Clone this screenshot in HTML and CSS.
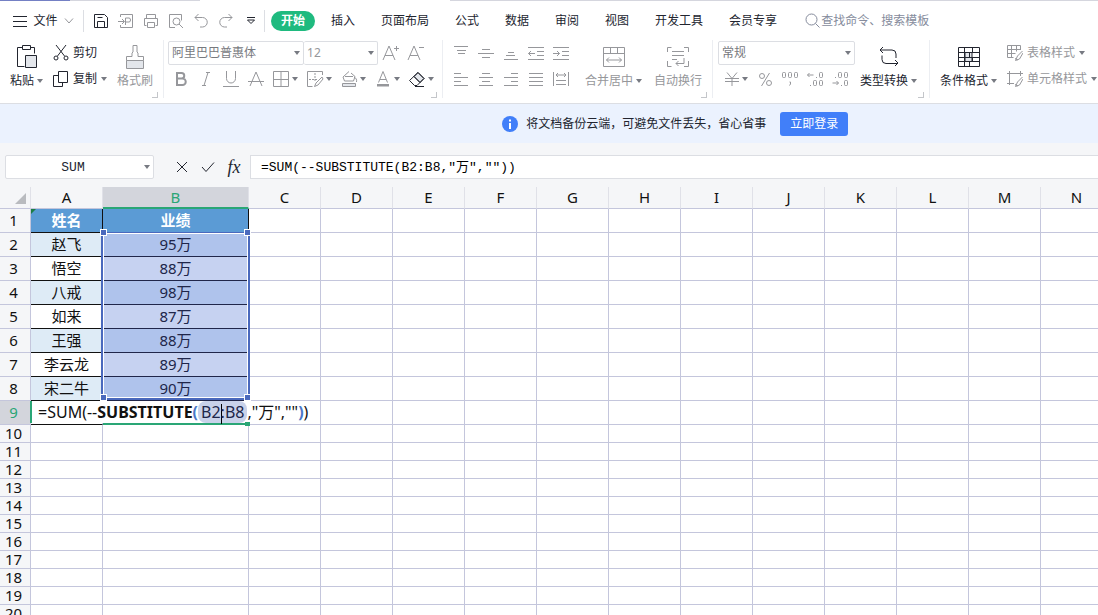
FILE: index.html
```html
<!DOCTYPE html>
<html lang="zh-CN">
<head>
  <meta charset="UTF-8" />
  <title>表格</title>
  <link rel="stylesheet" href="styles.css">
</head>
<body>
  <div class="window-edge"></div>

  <nav class="menubar">
    <button class="file">
      <svg class="icon" width="14" height="12"><path d="M0 1.5h14M0 6.5h14M0 11.5h14"/></svg>
      文件
      <svg class="icon muted" width="10" height="6"><path d="M1 .5l4 4.500 4-4.500"/></svg>
    </button>
    <div class="quick">
      <button title="保存"><svg class="icon" width="16" height="16"><path d="M1.500 1.500h10l3 3v10h-13zM4.500 14.500v-6h7v6M4.500 4.500h5"/></svg></button>
      <button class="muted" title="输出为PDF"><svg class="icon" width="16" height="16"><path d="M2.500 4v-2.500h12v13h-12v-2.500M0 8.500h6M4 6l2.500 2.500-2.500 2.500M7.500 12v-7h3.500a1.500 2 0 010 4h-3.500"/></svg></button>
      <button class="muted" title="打印"><svg class="icon" width="16" height="16"><path d="M3.500 5v-3.500h9v3.500M3.500 12.500h-2v-7h13v7h-2M4.500 9.500h7v5h-7z"/></svg></button>
      <button class="muted" title="打印预览"><svg class="icon" width="16" height="16"><path d="M7 14.500h-5.500v-13h12v6"/><circle cx="8.500" cy="8.500" r="3.500"/><path d="M11 11l4 4"/></svg></button>
      <button class="muted" title="撤销"><svg class="icon" width="16" height="16"><path d="M5.500 1l-3.500 3.500 3.500 3.500M2 4.500h7.500a4.500 4.500 0 010 9.500h-2.500"/></svg></button>
      <button class="muted" title="恢复"><svg class="icon" width="16" height="16"><path d="M10.500 1l3.500 3.500-3.500 3.500M14 4.500h-7.500a4.500 4.500 0 000 9.500h2.500"/></svg></button>
      <button title="更多"><svg class="icon" width="10" height="8"><path d="M1 .5h8M1.500 3l3.500 3.500 3.500-3.500z"/></svg></button>
    </div>
    <div class="tabs">
      <a class="active" href="#">开始</a>
      <a href="#">插入</a>
      <a href="#">页面布局</a>
      <a href="#">公式</a>
      <a href="#">数据</a>
      <a href="#">审阅</a>
      <a href="#">视图</a>
      <a href="#">开发工具</a>
      <a href="#">会员专享</a>
    </div>
    <label class="search">
      <svg class="icon" width="15" height="15"><circle cx="6.500" cy="6.500" r="5.500"/><path d="M10.500 10.500l4 4"/></svg>
      <input type="text" placeholder="查找命令、搜索模板" aria-label="查找命令、搜索模板" />
    </label>
  </nav>

  <section class="ribbon">
    <div class="group clipboard corner">
      <button class="big">
        <span class="pic"><svg class="icon" width="22" height="24"><path d="M6 2.500h-4.500v19h7M15 2.500h3.500v6M6.500.5h8v4h-8z"/><path class="shade" d="M9.500 10.500h11v12h-11z"/></svg></span>
        <span class="caption">粘贴<i class="caret"></i></span>
      </button>
      <div class="stack">
        <button class="line"><svg class="icon" width="16" height="16"><path d="M3 0l8.500 11M13 0l-8.500 11"/><circle cx="3" cy="13" r="2"/><circle cx="13" cy="13" r="2"/></svg>剪切</button>
        <button class="line"><svg class="icon" width="16" height="16"><path d="M5.500.5h9v11h-9zM5.500 4.500h-5v11h9v-4"/></svg>复制<i class="caret"></i></button>
      </div>
      <button class="big muted">
        <span class="pic"><svg class="icon" width="20" height="24"><path class="shade" d="M1.500 15.500h17v8h-17z"/><path d="M1.500 15.500v-4h5.500v-3.500l1-1v-6.500h4v6.500l1 1v3.500h5.500v4"/></svg></span>
        <span class="caption">格式刷</span>
      </button>
    </div>

    <div class="group font corner muted">
      <div class="stack">
        <div class="row">
          <span class="select font-name"><select aria-label="字体"><option>阿里巴巴普惠体</option></select></span>
          <span class="select font-size"><select aria-label="字号"><option>12</option></select></span>
          <button class="tool" title="增大字号"><svg class="icon" width="18" height="16"><path d="M1 15l6-14 6 14M3 10.500h8M12 3.500h5M14.500 1v5"/></svg></button>
          <button class="tool" title="减小字号"><svg class="icon" width="18" height="16"><path d="M1 15l6-14 6 14M3 10.500h8M12 2.500h5"/></svg></button>
        </div>
        <div class="row">
          <button class="tool" title="加粗"><svg class="icon heavy" width="16" height="16"><path d="M4 2h4.500a2.500 2.500 0 010 5.500h-4.500zM4 7.500h5.500a3 3 0 010 6.500h-5.500z"/></svg></button>
          <button class="tool" title="倾斜"><svg class="icon" width="16" height="16"><path d="M8 1.500h4M4 14.500h4M10 1.500l-4 13"/></svg></button>
          <button class="tool" title="下划线"><svg class="icon" width="16" height="16"><path d="M3.500 0v7.500a4.500 4.500 0 009 0v-7.500M0 15.500h16"/></svg></button>
          <button class="tool" title="删除线"><svg class="icon" width="16" height="16"><path d="M2 15l6-14 6 14M0 10.500h16"/></svg></button>
          <button class="tool wide" title="边框"><svg class="icon" width="18" height="16"><path d="M1.500.5h15v15h-15zM9 .5v15M1.500 8.500h15"/></svg><i class="caret"></i></button>
          <button class="tool wide" title="绘图边框"><svg class="icon" width="18" height="16"><path d="M16.500 4v-3.500h-15v15h5"/><path d="M9 2v9M3 8.500h8" stroke-dasharray="2 1"/><path d="M16 6l-6 6-1.500 3.500 3.500-1.500 5-6z"/></svg><i class="caret"></i></button>
          <button class="tool wide" title="填充颜色"><svg class="icon" width="18" height="16"><path d="M9 .5l-6 5.500 1.500 4h9l1.500-4.500-4-3.500M5 5.500h8M14 6c2 1 3 2.500 2.500 5"/><path class="shade" d="M2.500 12.500h13v3h-13z"/></svg><i class="caret"></i></button>
          <button class="tool wide" title="字体颜色"><svg class="icon" width="18" height="16"><path d="M4.500 11.500l4.500-11 4.500 11M6 8.500h6"/><path class="solid" d="M3 13h12v2.500h-12z"/></svg><i class="caret"></i></button>
          <button class="tool wide dark" title="清除"><svg class="icon" width="18" height="16"><path class="shade" d="M10 1.500l6 6-4 4-6-6z"/><path d="M10 1.500l-8.500 8 5 5h2.500l7-7zM6 5.500l6 6M7 15.500h9"/></svg><i class="caret"></i></button>
        </div>
      </div>
    </div>

    <div class="group align corner muted">
      <div class="stack">
        <div class="row">
          <button class="tool" title="顶端对齐"><svg class="icon" width="16" height="16"><path d="M1 1.500h14M4 5.500h9M5 8.500h7"/></svg></button>
          <button class="tool" title="垂直居中"><svg class="icon" width="16" height="16"><path d="M4 4.500h8M0 8.500h16M4 12.500h8"/></svg></button>
          <button class="tool" title="底端对齐"><svg class="icon" width="16" height="16"><path d="M5 7.500h6M3 10.500h9M1 14.500h14"/></svg></button>
          <button class="tool" title="减少缩进"><svg class="icon" width="16" height="16"><path d="M0 2.500h16M9 6.500h7M9 10.500h7M0 14.500h16M7 8.500h-6.500M3 6l-2.500 2.500 2.500 2.500"/></svg></button>
          <button class="tool" title="增加缩进"><svg class="icon" width="16" height="16"><path d="M0 2.500h16M9 6.500h7M9 10.500h7M0 14.500h16M0 8.500h6.500M4 6l2.500 2.500-2.500 2.500"/></svg></button>
        </div>
        <div class="row">
          <button class="tool" title="左对齐"><svg class="icon" width="16" height="16"><path d="M1 2.500h7M1 6.500h14M1 10.500h7M1 14.500h14"/></svg></button>
          <button class="tool" title="居中"><svg class="icon" width="16" height="16"><path d="M4 2.500h8M1 6.500h14M4 10.500h8M1 14.500h14"/></svg></button>
          <button class="tool" title="右对齐"><svg class="icon" width="16" height="16"><path d="M8 2.500h7M1 6.500h14M8 10.500h7M1 14.500h14"/></svg></button>
          <button class="tool" title="两端对齐"><svg class="icon" width="16" height="16"><path d="M1 2.500h14M1 6.500h14M1 10.500h14M1 14.500h14"/></svg></button>
          <button class="tool" title="分散对齐"><svg class="icon" width="16" height="16"><path d="M.5 1v14M15.500 1v14M3 4h10M5 2l-2 2 2 2M11 2l2 2-2 2M3 9.500h10M3 13.500h10"/></svg></button>
        </div>
      </div>
      <button class="big">
        <span class="pic"><svg class="icon" width="22" height="20"><path d="M.5.5h21v19h-21zM.5 6.500h21M7.500.5v6M14.500.5v6M3.500 13h15M6 10.500l-2.500 2.500 2.500 2.500M16 10.500l2.500 2.500-2.500 2.500"/></svg></span>
        <span class="caption">合并居中<i class="caret"></i></span>
      </button>
      <button class="big">
        <span class="pic"><svg class="icon" width="22" height="20"><path d="M.5 5v-4.500h4M17 .5h4.500v4.500M.5 14v5.500h4M17 19.500h4.500v-5.500M5 4.500h12M5 8.500h12M5 12.500h5M17 11v5.500h-8M11.500 14l-2.500 2.500 2.500 2.500"/></svg></span>
        <span class="caption">自动换行</span>
      </button>
    </div>

    <div class="group corner muted number">
      <div class="stack">
        <div class="row">
          <span class="select format"><select aria-label="数字格式"><option>常规</option></select></span>
        </div>
        <div class="row">
          <button class="tool wide" title="货币"><svg class="icon" width="18" height="16"><path d="M5 1.500l5 6 5-6M3 7.500h14M3 10.500h14M10 7.500v7.500"/></svg><i class="caret"></i></button>
          <button class="tool" title="百分比"><svg class="icon" width="16" height="16"><circle cx="5" cy="5" r="2.500"/><circle cx="12" cy="12" r="2.500"/><path d="M12.500 2l-8 13"/></svg></button>
          <button class="tool" title="千位分隔"><svg class="icon" width="18" height="16"><rect x="1.500" y="1.500" width="3" height="5" rx="1"/><rect x="7.500" y="1.500" width="3" height="5" rx="1"/><rect x="13.500" y="1.500" width="3" height="5" rx="1"/><path d="M8.500 11h1v2l-1 1.500"/></svg></button>
          <button class="tool" title="增加小数位"><svg class="icon" width="18" height="16"><path d="M1.500 4h6M3.500 2l-2 2 2 2M10 6.500h1M4 14.500h1"/><rect x="13.500" y="1.500" width="3" height="5" rx="1"/><rect x="7.500" y="9.500" width="3" height="5" rx="1"/><rect x="13.500" y="9.500" width="3" height="5" rx="1"/></svg></button>
          <button class="tool" title="减少小数位"><svg class="icon" width="18" height="16"><path d="M1.500 12h6M5.500 10l2 2-2 2M10 14.500h1M4 6.500h1"/><rect x="7.500" y="1.500" width="3" height="5" rx="1"/><rect x="13.500" y="1.500" width="3" height="5" rx="1"/><rect x="13.500" y="9.500" width="3" height="5" rx="1"/></svg></button>
        </div>
      </div>
      <button class="big dark">
        <span class="pic"><svg class="icon" width="20" height="22"><path d="M4 1l-3 3 3 3M1 4h12a4 4 0 014 4v4M16 14l3 3-3 3M19 17.500h-12a4 4 0 01-4-4v-4"/></svg></span>
        <span class="caption">类型转换<i class="caret"></i></span>
      </button>
    </div>

    <div class="group styles">
      <button class="big">
        <span class="pic"><svg class="icon" width="22" height="20"><path class="shade" d="M7 5.500h7v5h-7zM7 10.500h7v4h-7z"/><path d="M.5.5h21v19h-21zM.5 5.500h21M.5 10.500h21M.5 14.500h21M6.500.5v19M14.500.5v5M11.500 5.500v5M14.500 10.500v4M11.500 14.500v5"/></svg></span>
        <span class="caption">条件格式<i class="caret"></i></span>
      </button>
      <div class="stack muted">
        <button class="line"><svg class="icon" width="16" height="16"><path d="M13.500 5v-4.500h-13v12h6M.5 4.500h13M.5 8.500h8M4.500.5v12M9.500.5v6M15.500 6l-5 5-2 4.500 4-1.500 3.500-6M8 13.500l3 1.500"/></svg>表格样式<i class="caret"></i></button>
        <button class="line"><svg class="icon" width="16" height="16"><path d="M2.500 0v14M0 2.500h16M13.500 0v5M0 12.500h7M15.500 6l-5 5-2 4.500 4-1.500 3.500-6M8 13.500l3 1.500"/></svg>单元格样式<i class="caret"></i></button>
      </div>
    </div>
  </section>

  <section class="banner">
    <svg width="16" height="16"><circle cx="8" cy="8" r="8" fill="#417ff9"/><path d="M7 3.500h2v2h-2zM7 7h2v6h-2z" fill="#fff"/></svg>
    <span>将文档备份云端，可避免文件丢失，省心省事</span>
    <button>立即登录</button>
  </section>

  <section class="formula-bar">
    <span class="select name-box"><input type="text" value="SUM" aria-label="名称框" /></span>
    <div class="formula-tools">
      <button title="取消"><svg class="icon" width="12" height="12"><path d="M1 1l10 10M11 1l-10 10"/></svg></button>
      <button title="输入"><svg class="icon" width="14" height="12"><path d="M1 6l4 4.500 8-9"/></svg></button>
      <button class="fx" title="插入函数">fx</button>
    </div>
    <input class="formula" type="text" value='=SUM(--SUBSTITUTE(B2:B8,"万",""))' aria-label="编辑栏" />
  </section>

  <main class="sheet">
    <table id="grid"></table>
  </main>

  <script src="script.js"></script>
</body>
</html>
```

FILE: styles.css
```css
:root {
  --ink: #22252f;
  --muted: #96979b;
  --line: #dcdee3;
  --grid: #c4c6dc;
  --chrome: #f5f6f8;
  --green: #1fba7f;
  --range: #4a69bd;
}

* {
  box-sizing: border-box;
}

body {
  margin: 0;
  height: 100vh;
  overflow: hidden;
  display: flex;
  flex-direction: column;
  font-family: "Noto Sans", "Noto Sans CJK SC", sans-serif;
  font-size: 12px;
  line-height: 16px;
  color: var(--ink);
  background: #fff;
}

button, input, select {
  font: inherit;
  color: inherit;
  margin: 0;
  padding: 0;
  border: none;
  background: none;
  outline: none;
}

button {
  display: flex;
  align-items: center;
  justify-content: center;
  white-space: nowrap;
}

.icon {
  fill: none;
  stroke: currentColor;
  stroke-width: 1;
  flex: none;
}

.icon.heavy {
  stroke-width: 2;
}

.icon .shade {
  fill: #e3e6eb;
}

.icon .solid {
  fill: currentColor;
  stroke: none;
}

.muted {
  color: var(--muted);
}

.dark {
  color: var(--ink);
}

.caret {
  border: 3px solid transparent;
  border-top: 4px solid #777a82;
  border-bottom: none;
  flex: none;
}

/* menu bar */

.window-edge {
  height: 1px;
  flex: none;
  background: linear-gradient(to right, #7480c4 70px, #d5d6de 70px, #d5d6de 200px, #fff 200px, #fff 450px, #d5d6de 450px);
}

.menubar {
  display: flex;
  align-items: center;
  height: 39px;
  flex: none;
}

.file {
  gap: 6px;
  height: 22px;
  width: 84px;
  padding-left: 4px;
  border-right: 1px solid var(--line);
}

.quick {
  display: flex;
  align-items: center;
  width: 181px;
  height: 22px;
  padding-left: 4px;
  border-right: 1px solid var(--line);
}

.quick button {
  width: 25px;
}

.tabs {
  display: flex;
  gap: 26px;
  margin-left: 6px;
}

.tabs a {
  color: inherit;
  text-decoration: none;
  white-space: nowrap;
  line-height: 20px;
}

.tabs .active {
  width: 44px;
  margin-right: -10px;
  border-radius: 10px;
  text-align: center;
  font-weight: bold;
  color: #fff;
  background: var(--green);
}

.search {
  display: flex;
  align-items: center;
  gap: 1px;
  margin-left: 28px;
  flex: 1;
  color: #858b9c;
}

.search input {
  flex: 1;
  min-width: 0;
}

.search input::placeholder {
  color: #858b9c;
}

/* ribbon */

.ribbon {
  display: flex;
  height: 64px;
  flex: none;
  border-bottom: 1px solid var(--line);
}

.group {
  display: flex;
  gap: 12px;
  height: 58px;
  flex: none;
  padding: 0 10px 0 5px;
  border-right: 1px solid #eceef2;
  position: relative;
}

.group.clipboard {
  gap: 10px;
  padding-left: 10px;
}

.group.font {
  padding: 0 4px;
}

.group.number {
  gap: 5px;
  padding-right: 12px;
}

.group.styles {
  gap: 10px;
  padding-left: 10px;
  padding-right: 0;
  border-right: none;
}

.corner::after {
  content: "";
  position: absolute;
  right: 5px;
  bottom: 0;
  width: 5px;
  height: 5px;
  border-right: 1px solid #c4c6ca;
  border-bottom: 1px solid #c4c6ca;
}

.big {
  flex-direction: column;
  justify-content: flex-start;
}

.pic {
  display: flex;
  align-items: center;
  height: 33px;
}

.caption {
  display: flex;
  align-items: center;
  gap: 3px;
}

.stack .line {
  height: 26px;
  gap: 4px;
  justify-content: flex-start;
}

.row {
  display: flex;
  align-items: center;
  height: 26px;
}

.tool {
  width: 25px;
  height: 24px;
}

.tool.wide {
  width: 34px;
  gap: 2px;
}

.select {
  position: relative;
  height: 24px;
  border: 1px solid var(--line);
  border-radius: 2px;
}

.select select,
.select input {
  appearance: none;
  display: block;
  width: 100%;
  height: 22px;
  padding: 0 16px 0 3px;
}

.select::after {
  content: "";
  position: absolute;
  right: 3px;
  top: 9px;
  border: 3px solid transparent;
  border-top: 4px solid #777a82;
  border-bottom: none;
  pointer-events: none;
}

.font-name {
  width: 136px;
  color: #77797e;
}

.font-size {
  width: 74px;
  border-left: none;
}

.format {
  width: 137px;
  color: #77797e;
}

/* cloud backup banner */

.banner {
  display: flex;
  align-items: center;
  justify-content: center;
  gap: 8px;
  height: 39px;
  flex: none;
  padding-left: 23%;
  background: #ebf2fe;
}

.banner button {
  height: 24px;
  padding: 0 10px;
  margin-left: 6px;
  border-radius: 3px;
  color: #fff;
  background: #417ff9;
}

/* formula bar */

.formula-bar {
  display: flex;
  align-items: center;
  height: 44px;
  flex: none;
  padding: 4px 0 0 5px;
  background: var(--chrome);
}

.name-box {
  width: 149px;
  background: #fff;
  font-family: "Liberation Mono", "Noto Sans CJK SC", monospace;
  font-size: 13px;
}

.name-box input {
  text-align: center;
}

.formula-tools {
  display: flex;
  width: 96px;
  padding-left: 15px;
}

.formula-tools button {
  width: 26px;
  height: 24px;
}

.formula-tools .fx {
  font-family: "Liberation Serif", serif;
  font-style: italic;
  font-size: 18px;
}

.formula {
  flex: 1;
  min-width: 0;
  height: 24px;
  padding: 0 0 3px 10px;
  border: 1px solid var(--line);
  border-right: none;
  background: #fff;
  color: #000;
  font-family: "Liberation Mono", "Noto Sans CJK SC", monospace;
  font-size: 13px;
}

/* sheet */

.sheet {
  flex: 1;
  min-height: 0;
  overflow: hidden;
}

table {
  table-layout: fixed;
  border-collapse: separate;
  border-spacing: 0;
  width: 0;
  color: #111;
  font-size: 15px;
  line-height: 17px;
  text-align: center;
}

col {
  width: 72px;
}

col.head {
  width: 31px;
}

col.b {
  width: 146px;
}

th, td {
  height: 18px;
  padding: 0;
  border-right: 1px solid var(--grid);
  border-bottom: 1px solid var(--grid);
  position: relative;
  white-space: nowrap;
}

th {
  font-weight: normal;
  background: var(--chrome);
}

tbody th {
  padding-right: 3px;
}

thead th {
  height: 22px;
  border-right-color: #e0e1e8;
}

thead .all::after {
  content: "";
  position: absolute;
  right: 4px;
  bottom: 4px;
  border-left: 11px solid transparent;
  border-bottom: 11px solid #b9bbbf;
}

th.current {
  color: #2aa676;
  background: #d3d5dc;
}

thead th.current {
  border-bottom: 2px solid #2aa676;
}

.tall th, .tall td {
  height: 24px;
}

td.title {
  color: #fff;
  font-weight: bold;
  background: #5b9bd5;
  border-color: #111;
}

td.flag::before {
  content: "";
  position: absolute;
  left: 0;
  top: 0;
  border-top: 5px solid #1c7d46;
  border-right: 5px solid transparent;
}

td.name {
  border-color: #111;
}

.band td.name {
  background: #deebf6;
}

td.score {
  color: #20264a;
  background: #c6d2f1;
  border-color: #20264a;
}

.band td.score {
  background: #afc3ec;
}

/* frame round B2:B8, seven rows of 24px */
.range {
  position: absolute;
  left: -2px;
  right: -2px;
  top: -1px;
  height: 168px;
  border: 2px solid var(--range);
  border-top-width: 1px;
  box-shadow: inset 0 0 0 1px #fff;
  z-index: 1;
}

.range i {
  position: absolute;
  width: 5px;
  height: 5px;
  background: var(--range);
  outline: 1px solid #fff;
}

.range i:nth-child(1) { left: -2px; top: -3px; }
.range i:nth-child(2) { right: -2px; top: -3px; }
.range i:nth-child(3) { left: -2px; bottom: -2px; }
.range i:nth-child(4) { right: -2px; bottom: -2px; }

td.editing {
  border-bottom-color: #111;
}

.editor {
  position: absolute;
  left: -1px;
  top: 0;
  width: 289px;
  height: 22px;
  padding-left: 6px;
  border-left: 2px solid #2aa676;
  background: #fff;
  font-size: 16px;
  line-height: 22px;
  text-align: left;
  outline: none;
  z-index: 1;
}

.editor b span {
  color: #4a78c8;
}

.editor mark {
  padding: 0 3px;
  border-radius: 8px;
  color: #20264a;
  background: #c9d2ea;
}

.editor .cursor {
  display: inline-block;
  width: 1px;
  height: 20px;
  margin-right: -1px;
  vertical-align: middle;
  background: #000;
}

td.under {
  border-bottom: 2px solid #2aa676;
}

td.under::after {
  content: "";
  position: absolute;
  right: -2px;
  bottom: -3px;
  width: 5px;
  height: 4px;
  background: #2aa676;
  z-index: 2;
}
```

FILE: script.js
```js
const letters = 'ABCDEFGHIJKLMNOPQRSTUVWXYZ'.split('');

// only as many columns and rows as the window has room for
const sheet = document.querySelector('.sheet');
const columnCount = 2 + Math.ceil((sheet.clientWidth - 31 - 72 - 146) / 72);
const rowCount = 9 + Math.ceil((sheet.clientHeight - 22 - 9 * 24) / 18);
const columns = letters.slice(0, Math.max(columnCount, 4));

const people = [
  ['赵飞', '95万'],
  ['悟空', '88万'],
  ['八戒', '98万'],
  ['如来', '87万'],
  ['王强', '88万'],
  ['李云龙', '89万'],
  ['宋二牛', '90万']
];

const editor = '<div class="editor" contenteditable="true" spellcheck="false">=SUM(--<b>SUBSTITUTE<span>(</span></b>' +
  '<mark>B2<i class="cursor"></i>:B8</mark>,"万",""<b><span>)</span></b>)</div>';

function cells(row) {
  const empty = '<td></td>';
  let first = empty + empty;

  if (row === 1) {
    first = '<td class="title flag">姓名</td><td class="title">业绩</td>';
  } else if (row <= people.length + 1) {
    const [name, score] = people[row - 2];
    const range = row === 2 ? '<div class="range"><i></i><i></i><i></i><i></i></div>' : '';
    first = `<td class="name">${name}</td><td class="score">${score}${range}</td>`;
  } else if (row === 9) {
    first = `<td class="editing">${editor}</td><td class="under"></td>`;
  }

  return first + empty.repeat(columns.length - 2);
}

let html = '<colgroup><col class="head">';
html += columns.map(c => `<col class="${c.toLowerCase()}">`).join('');
html += '</colgroup><thead><tr><th class="all"></th>';
html += columns.map(c => `<th${c === 'B' ? ' class="current"' : ''}>${c}</th>`).join('');
html += '</tr></thead><tbody>';

for (let row = 1; row <= rowCount; row++) {
  const classes = (row <= 9 ? 'tall' : '') + (row > 1 && row < 9 && row % 2 === 0 ? ' band' : '');
  html += `<tr class="${classes}"><th${row === 9 ? ' class="current"' : ''}>${row}</th>${cells(row)}</tr>`;
}

document.getElementById('grid').innerHTML = html + '</tbody>';
```
